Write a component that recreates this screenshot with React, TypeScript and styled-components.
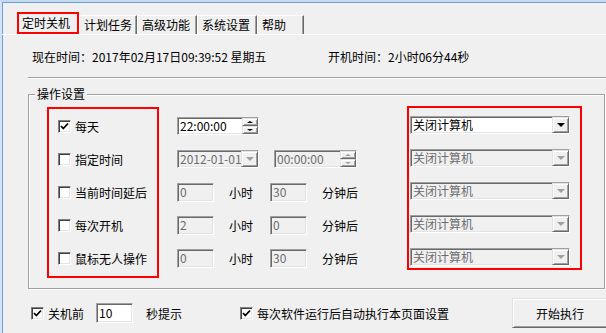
import React from "react";
import styled, { createGlobalStyle, css } from "styled-components";

const Global = createGlobalStyle`
  html, body { margin: 0; padding: 0; background: #f0f0f0; }
  body {
    font-family: "Noto Sans CJK SC", "Liberation Sans", sans-serif;
    font-size: 12px;
    color: #000;
  }
`;

const Window = styled.div`
  width: 606px;
  height: 333px;
  box-sizing: border-box;
  border-top: 2px solid #c4d9f2;
  border-left: 2px solid #d3e2f4;
  box-shadow: inset 1px 1px 0 #6f9dd6;
  background: #f0f0f0;
  overflow: hidden;
  display: flex;
  flex-direction: column;
`;

const TabStrip = styled.div`
  display: flex;
  align-items: flex-end;
  height: 22px;
  margin-top: 10px;
  padding-left: 15px;
`;

const ActiveTab = styled.div`
  box-sizing: border-box;
  width: 62px;
  height: 22px;
  border: 2px solid #ff0000;
  padding-left: 3px;
  line-height: 18px;
  white-space: nowrap;
`;

const Tab = styled.div<{ $w: number }>`
  box-sizing: border-box;
  width: ${(p) => p.$w}px;
  height: 19px;
  border-top: 1px solid #ffffff;
  border-left: 1px solid #ffffff;
  border-right: 1px solid #696969;
  box-shadow: inset -1px 0 0 #a0a0a0;
  padding-left: 4px;
  line-height: 18px;
  white-space: nowrap;
`;

const Panel = styled.div`
  border-top: 1px solid #ffffff;
  display: flex;
  flex-direction: column;
`;

const InfoRow = styled.div`
  display: flex;
  height: 18px;
  line-height: 18px;
  margin-top: 13px;
  padding-left: 30px;
`;

const InfoItem = styled.span<{ $w?: number }>`
  ${(p) => (p.$w ? `width: ${p.$w}px;` : "")}
  white-space: nowrap;
`;

const Divider = styled.div`
  margin: 11px 0 0 26px;
  border-top: 1px solid #a0a0a0;
  border-bottom: 1px solid #ffffff;
`;

const Group = styled.div`
  position: relative;
  box-sizing: border-box;
  margin: 15px 0 0 26px;
  width: 577px;
  height: 195px;
  border: 1px solid #a0a0a0;
  box-shadow: inset 1px 1px 0 #ffffff, 1px 1px 0 #ffffff;
  padding: 12px 0 0 18px;
  display: flex;
  align-items: flex-start;
`;

const Legend = styled.span`
  position: absolute;
  top: -9px;
  left: 6px;
  padding: 0 2px;
  line-height: 16px;
  background: #f0f0f0;
`;

const RedBox = styled.div<{ $w: number; $h: number; $pl: number; $mt?: number; $ml?: number }>`
  box-sizing: border-box;
  width: ${(p) => p.$w}px;
  height: ${(p) => p.$h}px;
  margin-top: ${(p) => p.$mt ?? 0}px;
  margin-left: ${(p) => p.$ml ?? 0}px;
  border: 2px solid #ff0000;
  padding: 8px 0 0 ${(p) => p.$pl}px;
  display: flex;
  flex-direction: column;
  gap: 15px;
`;

const CheckRow = styled.label`
  display: flex;
  align-items: center;
  gap: 4px;
  height: 18px;
  white-space: nowrap;
`;

const Box = styled.span`
  box-sizing: border-box;
  width: 13px;
  height: 13px;
  flex: none;
  border: 1px solid;
  border-color: #808080 #ffffff #ffffff #808080;
  box-shadow: inset 1px 1px 0 #404040, inset -1px -1px 0 #e3e3e3;
  background: #ffffff;
  display: flex;
  align-items: center;
  justify-content: center;
`;

const MidCol = styled.div`
  margin-left: 18px;
  margin-top: 10px;
  width: 182px;
  display: flex;
  flex-direction: column;
  gap: 15px;
`;

const CtrlRow = styled.div`
  display: flex;
  align-items: center;
  height: 18px;
`;

const sunken = css`
  box-sizing: border-box;
  border: 1px solid;
  border-color: #a0a0a0 #ffffff #ffffff #a0a0a0;
  box-shadow: inset 1px 1px 0 #696969, inset -1px -1px 0 #e3e3e3;
`;

const raised = css`
  box-sizing: border-box;
  border: 1px solid;
  border-color: #e3e3e3 #696969 #696969 #e3e3e3;
  box-shadow: inset 1px 1px 0 #ffffff, inset -1px -1px 0 #a0a0a0;
  background: #f0f0f0;
`;

const Field = styled.div<{ $w: number; $h?: number; $disabled?: boolean; $ml?: number }>`
  ${sunken}
  width: ${(p) => p.$w}px;
  height: ${(p) => p.$h ?? 18}px;
  margin-left: ${(p) => p.$ml ?? 0}px;
  background: ${(p) => (p.$disabled ? "#f0f0f0" : "#ffffff")};
  color: ${(p) => (p.$disabled ? "#6d6d6d" : "#000000")};
  display: flex;
  align-items: center;
  flex: none;
`;

const FieldText = styled.span`
  flex: 1;
  padding-left: 2px;
  line-height: 16px;
  white-space: nowrap;
  overflow: hidden;
`;

const SpinCol = styled.div`
  display: flex;
  flex-direction: column;
  width: 16px;
  height: 16px;
  flex: none;
`;

const SpinBtn = styled.div<{ $up?: boolean; $disabled?: boolean }>`
  ${raised}
  flex: 1;
  display: flex;
  align-items: center;
  justify-content: center;
  &::after {
    content: "";
    border-left: 3px solid transparent;
    border-right: 3px solid transparent;
    ${(p) =>
      p.$up
        ? `border-bottom: 2px solid ${p.$disabled ? "#a0a0a0" : "#000"};`
        : `border-top: 2px solid ${p.$disabled ? "#a0a0a0" : "#000"};`}
  }
`;

const DropBtn = styled.div<{ $disabled?: boolean }>`
  ${raised}
  width: 17px;
  height: 16px;
  flex: none;
  display: flex;
  align-items: center;
  justify-content: center;
  &::after {
    content: "";
    border-left: 4px solid transparent;
    border-right: 4px solid transparent;
    border-top: 4px solid ${(p) => (p.$disabled ? "#a0a0a0" : "#000")};
  }
`;

const Unit = styled.span<{ $ml: number }>`
  margin-left: ${(p) => p.$ml}px;
  white-space: nowrap;
`;

const BottomRow = styled.div`
  display: flex;
  align-items: center;
  height: 30px;
  margin-top: 9px;
  padding-left: 29px;
`;

const Spacer = styled.span<{ $w: number }>`
  width: ${(p) => p.$w}px;
  flex: none;
`;

const Button = styled.div`
  ${raised}
  margin-left: auto;
  margin-right: -2px;
  width: 96px;
  height: 30px;
  display: flex;
  align-items: center;
  justify-content: center;
  font-size: 12px;
`;

function Check({ checked }: { checked?: boolean }) {
  return (
    <Box>
      {checked && (
        <svg width="9" height="9" viewBox="0 0 9 9">
          <polyline points="1,4 3.3,6.5 8,1.5" fill="none" stroke="#000" strokeWidth="1.8" />
        </svg>
      )}
    </Box>
  );
}

function Spin({ value, w, disabled, ml }: { value: string; w: number; disabled?: boolean; ml?: number }) {
  return (
    <Field $w={w} $disabled={disabled} $ml={ml}>
      <FieldText>{value}</FieldText>
      <SpinCol>
        <SpinBtn $up $disabled={disabled} />
        <SpinBtn $disabled={disabled} />
      </SpinCol>
    </Field>
  );
}

function Combo({ value, w, disabled }: { value: string; w: number; disabled?: boolean }) {
  return (
    <Field $w={w} $disabled={disabled}>
      <FieldText>{value}</FieldText>
      <DropBtn $disabled={disabled} />
    </Field>
  );
}

function DelayRow({ h, m }: { h: string; m: string }) {
  return (
    <CtrlRow>
      <Field $w={37} $h={19} $disabled>
        <FieldText>{h}</FieldText>
      </Field>
      <Unit $ml={15}>小时</Unit>
      <Field $w={37} $h={19} $disabled $ml={17}>
        <FieldText>{m}</FieldText>
      </Field>
      <Unit $ml={15}>分钟后</Unit>
    </CtrlRow>
  );
}

const modes = [
  { label: "每天", checked: true },
  { label: "指定时间" },
  { label: "当前时间延后" },
  { label: "每次开机" },
  { label: "鼠标无人操作" },
];

export default function App() {
  return (
    <>
      <Global />
      <Window>
        <TabStrip>
          <ActiveTab>定时关机</ActiveTab>
          <Tab $w={58}>计划任务</Tab>
          <Tab $w={60}>高级功能</Tab>
          <Tab $w={60}>系统设置</Tab>
          <Tab $w={47}>帮助</Tab>
        </TabStrip>
        <Panel>
          <InfoRow>
            <InfoItem $w={296}>现在时间：2017年02月17日09:39:52 星期五</InfoItem>
            <InfoItem>开机时间：2小时06分44秒</InfoItem>
          </InfoRow>
          <Divider />
          <Group>
            <Legend>操作设置</Legend>
            <RedBox $w={112} $h={171} $pl={9}>
              {modes.map((m) => (
                <CheckRow key={m.label}>
                  <Check checked={m.checked} />
                  {m.label}
                </CheckRow>
              ))}
            </RedBox>
            <MidCol>
              <CtrlRow>
                <Spin value="22:00:00" w={82} />
              </CtrlRow>
              <CtrlRow>
                <Combo value="2012-01-01" w={82} disabled />
                <Spin value="00:00:00" w={83} disabled ml={15} />
              </CtrlRow>
              <DelayRow h="0" m="30" />
              <DelayRow h="2" m="0" />
              <DelayRow h="0" m="30" />
            </MidCol>
            <RedBox $w={175} $h={164} $pl={1} $mt={-1} $ml={48}>
              <Combo value="关闭计算机" w={160} />
              <Combo value="关闭计算机" w={160} disabled />
              <Combo value="关闭计算机" w={160} disabled />
              <Combo value="关闭计算机" w={160} disabled />
              <Combo value="关闭计算机" w={160} disabled />
            </RedBox>
          </Group>
          <BottomRow>
            <CheckRow>
              <Check checked />
              关机前
            </CheckRow>
            <Spacer $w={12} />
            <Field $w={37} $h={20}>
              <FieldText>10</FieldText>
            </Field>
            <Unit $ml={13}>秒提示</Unit>
            <Spacer $w={58} />
            <CheckRow>
              <Check checked />
              每次软件运行后自动执行本页面设置
            </CheckRow>
            <Button>开始执行</Button>
          </BottomRow>
        </Panel>
      </Window>
    </>
  );
}
